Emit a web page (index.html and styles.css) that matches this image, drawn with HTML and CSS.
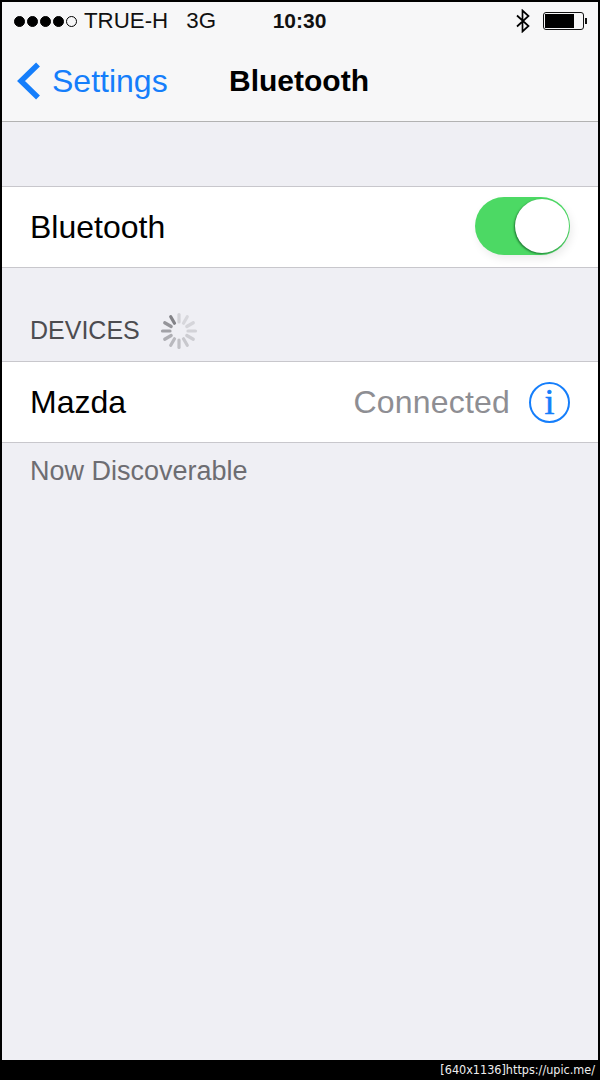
FILE: index.html
```html
<!DOCTYPE html>
<html>

<head>
  <meta name="viewport" content="width=device-width, initial-scale=1">
  <link rel="stylesheet" href="styles.css">
</head>

<body>
  <div class="phone">
    <div class="topbar">
      <div class="status">
        <div class="status-left">
          <div class="signal">
            <span class="dot"></span><span class="dot"></span><span class="dot"></span><span class="dot"></span><span class="dot empty"></span>
          </div>
          <span class="carrier">TRUE-H</span>
          <span class="network">3G</span>
        </div>
        <div class="time">10:30</div>
        <div class="status-right">
          <svg class="bt-icon" width="16" height="24" viewBox="0 0 16 24">
            <path d="M2 6.5 L13.5 17 L7.5 22.5 V1.5 L13.5 7 L2 17.5" fill="none" stroke="#000" stroke-width="1.7"/>
          </svg>
          <div class="battery"><div class="battery-fill"></div></div>
          <div class="battery-nub"></div>
        </div>
      </div>
      <div class="nav">
        <div class="back">
          <svg width="26" height="38" viewBox="0 0 26 38">
            <path d="M22 2.5 L5 19 L22 35.5" fill="none" stroke="#157efb" stroke-width="5.5"/>
          </svg>
          <span>Settings</span>
        </div>
        <div class="title">Bluetooth</div>
      </div>
    </div>

    <div class="spacer"></div>

    <div class="row">
      <span class="row-label">Bluetooth</span>
      <div class="switch"><div class="knob"></div></div>
    </div>

    <div class="section-head">
      <span>DEVICES</span>
      <svg class="spinner" width="38" height="38" viewBox="-19 -19 38 38">
        <g stroke="#6f6f74" stroke-width="3.2" stroke-linecap="round">
          <line x1="0" y1="-9" x2="0" y2="-16.5" opacity="0.22"/>
          <line x1="0" y1="-9" x2="0" y2="-16.5" opacity="0.18" transform="rotate(30)"/>
          <line x1="0" y1="-9" x2="0" y2="-16.5" opacity="0.2" transform="rotate(60)"/>
          <line x1="0" y1="-9" x2="0" y2="-16.5" opacity="0.22" transform="rotate(90)"/>
          <line x1="0" y1="-9" x2="0" y2="-16.5" opacity="0.26" transform="rotate(120)"/>
          <line x1="0" y1="-9" x2="0" y2="-16.5" opacity="0.3" transform="rotate(150)"/>
          <line x1="0" y1="-9" x2="0" y2="-16.5" opacity="0.36" transform="rotate(180)"/>
          <line x1="0" y1="-9" x2="0" y2="-16.5" opacity="0.42" transform="rotate(210)"/>
          <line x1="0" y1="-9" x2="0" y2="-16.5" opacity="0.5" transform="rotate(240)"/>
          <line x1="0" y1="-9" x2="0" y2="-16.5" opacity="0.6" transform="rotate(270)"/>
          <line x1="0" y1="-9" x2="0" y2="-16.5" opacity="0.7" transform="rotate(300)"/>
          <line x1="0" y1="-9" x2="0" y2="-16.5" opacity="0.85" transform="rotate(330)"/>
        </g>
      </svg>
    </div>

    <div class="row">
      <span class="row-label">Mazda</span>
      <div class="row-right">
        <span class="row-status">Connected</span>
        <div class="info">i</div>
      </div>
    </div>

    <div class="section-foot">Now Discoverable</div>
  </div>

  <div class="watermark">[640x1136]https://upic.me/</div>
</body>

</html>
```

FILE: styles.css
```css
* {
  box-sizing: border-box;
}

body {
  margin: 0;
  background-color: #000;
  font-family: "Liberation Sans", Arial, sans-serif;
}

.phone {
  height: 1060px;
  margin: 0 2px;
  padding-top: 2px;
  background-color: #efeff4;
  background-clip: content-box;
}

/* Status bar and nav bar share one background */
.topbar {
  height: 120px;
  background-color: #f7f7f8;
  border-bottom: 1px solid #b2b2b2;
}

.status {
  display: flex;
  align-items: center;
  height: 38px;
  padding: 0 10px 0 12px;
  font-size: 22.3px;
  color: #111;
}

.status-left,
.status-right {
  flex: 1;
  display: flex;
  align-items: center;
}

.status-right {
  justify-content: flex-end;
}

.signal {
  display: flex;
  gap: 2px;
  margin-right: 7px;
}

.dot {
  width: 11px;
  height: 11px;
  border-radius: 50%;
  background-color: #000;
  border: 1px solid #000;
}

.dot.empty {
  background-color: transparent;
}

.network {
  margin-left: 18px;
}

.time {
  margin-right: 3px;
  font-weight: bold;
  font-size: 21px;
}

.bt-icon {
  margin-right: 12px;
}

.battery {
  width: 41px;
  height: 18px;
  padding: 1px;
  border: 1px solid #111;
  border-radius: 3px;
}

.battery-fill {
  width: 29px;
  height: 100%;
  background-color: #000;
}

.battery-nub {
  width: 2px;
  height: 6px;
  margin-left: 1px;
  margin-right: 1px;
  background-color: #111;
}

.nav {
  display: flex;
  align-items: center;
  height: 81px;
  padding-left: 14px;
}

.back {
  display: flex;
  align-items: center;
  width: 213px;
  color: #157efb;
  font-size: 32px;
}

.back span {
  margin-top: 2px;
  margin-left: 10px;
}

.title {
  font-size: 30px;
  font-weight: bold;
  color: #000;
}

.spacer {
  height: 64px;
}

.row {
  display: flex;
  align-items: center;
  justify-content: space-between;
  height: 82px;
  padding: 0 28px;
  background-color: #fff;
  border-top: 1px solid #c8c7cc;
  border-bottom: 1px solid #c8c7cc;
  font-size: 32px;
  color: #000;
}

.row-right {
  display: flex;
  align-items: center;
}

.row-status {
  color: #8e8e93;
  margin-right: 19px;
  letter-spacing: 0.2px;
}

.switch {
  display: flex;
  justify-content: flex-end;
  align-items: center;
  width: 95px;
  height: 58px;
  margin-bottom: 2px;
  padding-right: 1px;
  border-radius: 29px;
  background-color: #4cd964;
  box-shadow: 2px 4px 8px rgba(0, 0, 0, 0.08);
}

.knob {
  width: 54px;
  height: 54px;
  border-radius: 50%;
  background-color: #fff;
  box-shadow: -1px 1px 2px rgba(0, 60, 20, 0.6);
}

.section-head {
  display: flex;
  align-items: center;
  height: 93px;
  padding: 32px 0 0 28px;
  font-size: 25px;
  color: #4c4c50;
}

.spinner {
  margin-left: 20px;
}

.section-foot {
  padding: 13px 0 0 28px;
  font-size: 27px;
  color: #6d6d72;
}

.info {
  width: 41px;
  height: 41px;
  border: 2px solid #157efb;
  border-radius: 50%;
  color: #157efb;
  font-family: "Liberation Serif", serif;
  font-size: 36px;
  line-height: 36px;
  text-align: center;
  -webkit-text-stroke: 0.5px #157efb;
}

/* Upload site stamp in the bottom strip */
.watermark {
  height: 20px;
  padding-right: 5px;
  text-align: right;
  font-family: "DejaVu Sans", sans-serif;
  font-stretch: condensed;
  font-size: 12.5px;
  line-height: 20px;
  color: #eee;
}
```
